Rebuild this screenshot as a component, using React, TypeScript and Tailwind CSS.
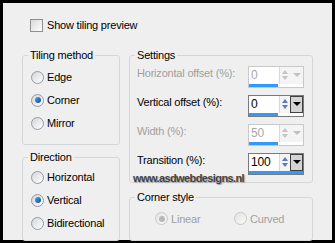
import React from 'react';

const FONT = "font-['Liberation_Sans',Arial,sans-serif]";

function Radio({ checked = false, disabled = false }: { checked?: boolean; disabled?: boolean }) {
  return (
    <div
      className={`w-[13px] h-[13px] rounded-full border flex items-center justify-center flex-shrink-0 ${
        disabled
          ? 'border-[#c8c8c8] bg-gradient-to-br from-[#e4e4e4] to-[#f8f8f8]'
          : 'border-[#8f9ba6] bg-gradient-to-br from-[#d6d6d6] to-[#ffffff]'
      }`}
    >
      {checked && (
        <div
          className={`w-[6px] h-[6px] rounded-full ${
            disabled ? 'bg-[#b8b8b8]' : 'bg-gradient-to-br from-[#4fa3e6] to-[#0b4f94]'
          }`}
        />
      )}
    </div>
  );
}

function RadioRow({ label, checked, disabled }: { label: string; checked?: boolean; disabled?: boolean }) {
  return (
    <div className="h-[23px] flex items-center gap-[3px]">
      <Radio checked={checked} disabled={disabled} />
      <span className={disabled ? 'text-[#a0a0a0]' : 'text-black'}>{label}</span>
    </div>
  );
}

function Group({
  title,
  className,
  inner,
  children,
}: {
  title: string;
  className: string;
  inner: string;
  children: React.ReactNode;
}) {
  return (
    <fieldset className={`border border-[#d3d7da] rounded-[3px] ${className}`}>
      <legend className="ml-[5px] px-[2px] leading-[13px] text-black">{title}</legend>
      <div className={inner}>{children}</div>
    </fieldset>
  );
}

function NumberBox({ value, disabled, full }: { value: string; disabled?: boolean; full?: boolean }) {
  const arrow = disabled ? 'border-t-[#c0c0c0]' : 'border-t-[#000000]';
  return (
    <div className={`w-[56px] h-[22px] border flex flex-col ${disabled ? 'border-[#c9c9c9]' : 'border-[#7a7a7a]'}`}>
      <div className="flex h-[17px]">
        <div className={`flex-1 bg-white pl-[2px] leading-[16px] text-[12px] ${disabled ? 'text-[#a8a8a8]' : 'text-black'}`}>
          {value}
        </div>
        <div className="w-[11px] flex flex-col items-center justify-center gap-[2px] bg-[#f4f4f4] border-l border-[#d8d8d8]">
          <div className={`w-0 h-0 border-x-[3px] border-x-transparent border-b-[4px] ${disabled ? 'border-b-[#c4c4c4]' : 'border-b-[#5d79c4]'}`} />
          <div className={`w-0 h-0 border-x-[3px] border-x-transparent border-t-[4px] ${disabled ? 'border-t-[#c4c4c4]' : 'border-t-[#5d79c4]'}`} />
        </div>
        <div
          className={`w-[13px] flex items-center justify-center ${
            disabled ? 'bg-[#f4f4f4]' : 'bg-[#d4d4d4] border border-[#404040]'
          }`}
        >
          <div className={`w-0 h-0 border-x-[4px] border-x-transparent border-t-[4px] ${arrow}`} />
        </div>
      </div>
      <div className="flex-1 bg-white">
        <div className={`h-full bg-[#3399ff] ${full ? 'w-full' : 'w-[29px]'}`} />
      </div>
    </div>
  );
}

function SettingRow({ label, value, disabled, full }: { label: string; value: string; disabled?: boolean; full?: boolean }) {
  return (
    <div className="h-[29px] flex items-start justify-between">
      <span className={`leading-[13px] pt-[1px] ${disabled ? 'text-[#a0a0a0]' : 'text-black'}`}>{label}</span>
      <NumberBox value={value} disabled={disabled} full={full} />
    </div>
  );
}

export default function App() {
  return (
    <div className={`w-[335px] h-[243px] border-[3px] border-black bg-[#efefef] relative ${FONT} text-[11px] tracking-[-0.2px]`}>
      <div className="pt-[14px] pl-[27px] flex items-center gap-[4px]">
        <div className="w-[13px] h-[13px] border border-[#8e8f8f] bg-gradient-to-br from-[#d8d8d8] to-white" />
        <span className="text-black">Show tiling preview</span>
      </div>

      <div className="mt-[15px] pl-[19px] flex gap-[9px]">
        <div className="w-[98px] flex flex-col">
          <Group title="Tiling method" className="h-[96px]" inner="pl-[8px] pt-[4px]">
            <RadioRow label="Edge" />
            <RadioRow label="Corner" checked />
            <RadioRow label="Mirror" />
          </Group>
          <Group title="Direction" className="h-[90px] mt-[6px]" inner="pl-[8px] pt-[2px]">
            <RadioRow label="Horizontal" />
            <RadioRow label="Vertical" checked />
            <RadioRow label="Bidirectional" />
          </Group>
        </div>

        <div className="w-[184px] flex flex-col">
          <Group title="Settings" className="h-[134px]" inner="pl-[7px] pr-[8px] pt-[4px]">
            <SettingRow label="Horizontal offset (%):" value="0" disabled />
            <SettingRow label="Vertical offset (%):" value="0" />
            <SettingRow label="Width (%):" value="50" disabled />
            <SettingRow label="Transition (%):" value="100" full />
          </Group>
          <Group title="Corner style" className="h-[50px] mt-[8px]" inner="pl-[25px] pt-[7px]">
            <div className="flex items-center">
              <div className="w-[79px] flex items-center gap-[3px]">
                <Radio checked disabled />
                <span className="text-[#a0a0a0]">Linear</span>
              </div>
              <div className="flex items-center gap-[3px]">
                <Radio disabled />
                <span className="text-[#a0a0a0]">Curved</span>
              </div>
            </div>
          </Group>
        </div>
      </div>

      {/* watermark */}
      <div className="absolute left-[130px] top-[167px] font-bold text-[11px] tracking-[-0.6px] text-[#444444] [text-shadow:1px_1px_1px_#a0a0a0]">
        www.asdwebdesigns.nl
      </div>
    </div>
  );
}
